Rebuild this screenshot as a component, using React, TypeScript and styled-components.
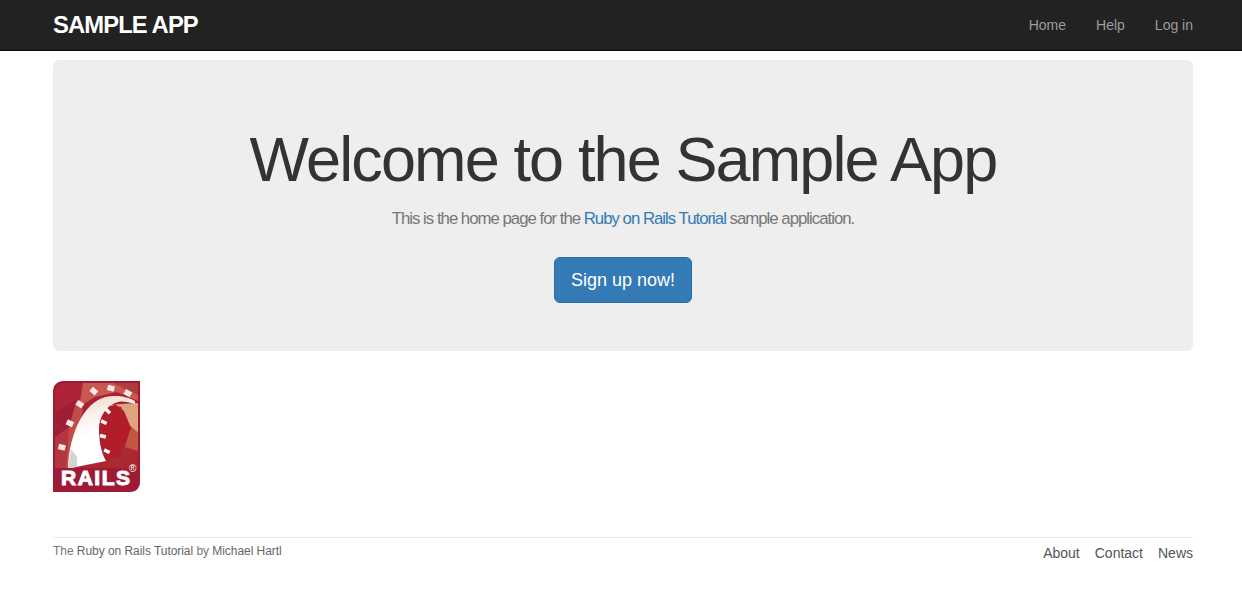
import styled, { createGlobalStyle } from "styled-components"

const navLinks = ["Home", "Help", "Log in"]
const footerLinks = ["About", "Contact", "News"]

const outerTies = [
    { x: 9, y: 66, r: 15 },
    { x: 17, y: 42, r: 25 },
    { x: 27, y: 23, r: 35 },
    { x: 41, y: 10, r: 40 },
    { x: 58, y: 7, r: 15 },
    { x: 75, y: 12, r: 30 },
]

const innerTies = [
    { x: 55, y: 30, r: 45 },
    { x: 51, y: 41, r: 25 },
    { x: 50, y: 55, r: 15 },
    { x: 54, y: 70, r: 25 },
]

const RailsLogo = () => (
    <svg width="87" height="111" viewBox="0 0 87 111">
        <defs>
            <linearGradient id="rail" x1="0.2" y1="0" x2="0.4" y2="1">
                <stop offset="0" stopColor="#f0d2c2" />
                <stop offset="0.25" stopColor="#faf0ea" />
                <stop offset="0.55" stopColor="#fff" />
            </linearGradient>
        </defs>
        <path d="M11 0H87V101C87 107 83 111 77 111H0V11C0 4 4 0 11 0Z" fill="#9e1b35" />
        <path d="M11 2H85V87H2V11C2 5 5 2 11 2Z" fill="#a81f38" />
        <polygon points="2,32 24,18 16,46 2,56" fill="#a01d36" />
        <polygon points="11,2 38,2 24,18 2,32 2,11" fill="#ad2439" />
        <polygon points="2,56 16,46 13,87 2,87" fill="#b5363f" />
        <polygon points="16,46 24,18 30,30 22,60 15,87 13,87" fill="#c24c4a" />
        <polygon points="30,2 85,2 85,20 64,11 42,16 26,26" fill="#c9584f" />
        <polygon points="60,2 85,2 85,14" fill="#b23c3c" />
        <polygon points="52,24 85,22 85,52 76,44 68,26" fill="#dda47e" />
        <polygon points="48,78 66,76 78,46 85,52 85,87 30,87" fill="#ab2831" />
        <polygon points="78,46 85,52 85,70 72,66" fill="#c25842" />
        <polygon points="53,29 62,23 71,30 78,47 70,66 54,80 47,62 46,42" fill="#b11d2b" />
        <path d="M15 87C16 52 33 13 62 15C70 15 77 17 82 20L82 23C75 21 70 20 65 21C53 24 46 36 46 48C46 60 48 71 53 80L18 87Z" fill="url(#rail)" />
        <polygon points="15,87 18,68 24,76 24,86" fill="#d6d2cf" />
        <g fill="#f5e9e4">
            {outerTies.map(({ x, y, r }) => (
                <rect key={x} x={x - 3.5} y={y - 2.5} width="7" height="5.5" transform={`rotate(${r} ${x} ${y})`} />
            ))}
        </g>
        <g fill="#fff">
            {innerTies.map(({ x, y, r }) => (
                <rect key={x + y} x={x - 3} y={y - 1.5} width="6" height="3.5" transform={`rotate(${r} ${x} ${y})`} />
            ))}
        </g>
        <RailsWord x="8" y="104" textLength="69" lengthAdjust="spacing">RAILS</RailsWord>
        <RailsMark x="76" y="91">®</RailsMark>
    </svg>
)

const App = () => {
    return (
        <>
            <GlobalStyle />
            <Header>
                <Container>
                    <Logo href="#">SAMPLE APP</Logo>
                    <NavList>
                        {navLinks.map((title) => (
                            <li key={title}>
                                <NavItem href="#">{title}</NavItem>
                            </li>
                        ))}
                    </NavList>
                </Container>
            </Header>
            <Main>
                <Jumbotron>
                    <Title>Welcome to the Sample App</Title>
                    <Lead>
                        This is the home page for the <TextLink href="#">Ruby on Rails Tutorial</TextLink> sample application.
                    </Lead>
                    <SignUp href="#">Sign up now!</SignUp>
                </Jumbotron>
                <LogoLink href="#">
                    <RailsLogo />
                </LogoLink>
                <Footer>
                    <Small>
                        The <FooterTextLink href="#">Ruby on Rails Tutorial</FooterTextLink> by{" "}
                        <FooterTextLink href="#">Michael Hartl</FooterTextLink>
                    </Small>
                    <FooterNav>
                        {footerLinks.map((title) => (
                            <li key={title}>
                                <FooterLink href="#">{title}</FooterLink>
                            </li>
                        ))}
                    </FooterNav>
                </Footer>
            </Main>
        </>
    )
}
export default App

const GlobalStyle = createGlobalStyle`
    * {
        box-sizing: border-box;
    }
    body {
        margin: 0;
        background: #fff;
        color: #333;
        font-family: "Liberation Sans", Arial, sans-serif;
        font-size: 14px;
        line-height: 20px;
    }
    ul {
        list-style: none;
        margin: 0;
        padding: 0;
    }
    a {
        text-decoration: none;
    }
`

const Header = styled.header`
    height: 51px;
    background: #222;
    border-bottom: 1px solid #080808;
`

const Container = styled.div`
    width: 1140px;
    height: 50px;
    margin-left: 53px;
    display: flex;
    justify-content: space-between;
    align-items: center;
`

const Logo = styled.a`
    color: #fff;
    font-size: 23.8px;
    font-weight: bold;
    letter-spacing: -0.9px;
    text-transform: uppercase;
`

const NavList = styled.ul`
    display: flex;
    gap: 30px;
`

const NavItem = styled.a`
    color: #9d9d9d;
`

const Main = styled.main`
    width: 1140px;
    margin-left: 53px;
    padding-top: 9px;
`

const Jumbotron = styled.section`
    height: 291px;
    padding-top: 64px;
    background: #eee;
    border-radius: 6px;
    text-align: center;
`

const Title = styled.h1`
    margin: 0;
    color: #333;
    font-size: 63px;
    font-weight: 500;
    line-height: 70px;
    letter-spacing: -1.88px;
`

const Lead = styled.h2`
    margin: 15px 0 28px;
    color: #777;
    font-size: 16.8px;
    font-weight: normal;
    line-height: 20px;
    letter-spacing: -1px;
`

const TextLink = styled.a`
    color: #337ab7;
`

const SignUp = styled.a`
    display: inline-block;
    padding: 10px 16px;
    background: #337ab7;
    border: 1px solid #2e6da4;
    border-radius: 6px;
    color: #fff;
    font-size: 18px;
    line-height: 24px;
`

const LogoLink = styled.a`
    display: block;
    width: 87px;
    height: 111px;
    margin-top: 30px;
    svg {
        display: block;
    }
`

const RailsWord = styled.text`
    fill: #fff;
    stroke: #fff;
    stroke-width: 1px;
    font-family: "Liberation Sans", Arial, sans-serif;
    font-size: 21px;
    font-weight: bold;
`

const RailsMark = styled.text`
    fill: #fff;
    font-family: "Liberation Sans", Arial, sans-serif;
    font-size: 10px;
`

const Footer = styled.footer`
    margin-top: 45px;
    padding-top: 5px;
    border-top: 1px solid #eaeaea;
    display: flex;
    justify-content: space-between;
    align-items: flex-start;
    color: #777;
`

const Small = styled.small`
    font-size: 12px;
    line-height: 17px;
    letter-spacing: -0.05px;
`

const FooterTextLink = styled.a`
    color: #666;
`

const FooterNav = styled.ul`
    display: flex;
    gap: 15px;
`

const FooterLink = styled.a`
    color: #555;
`
